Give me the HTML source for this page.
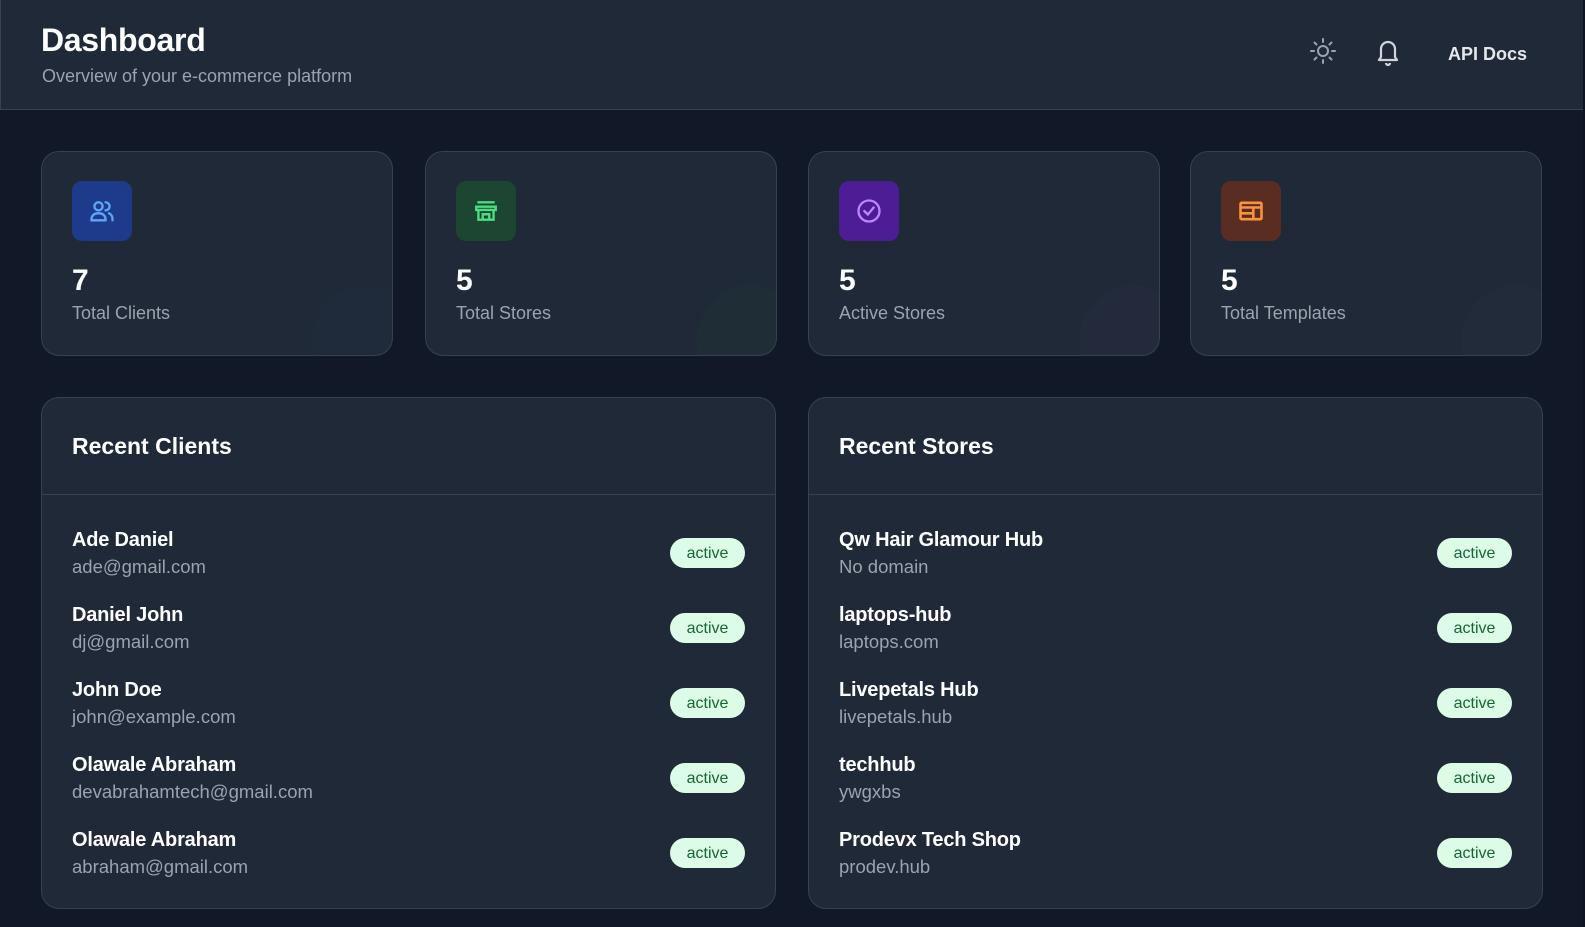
<!DOCTYPE html>
<html><head><meta charset="utf-8"><style>
*{box-sizing:border-box;margin:0;padding:0}
body{width:1585px;height:927px;background:#111827;font-family:"Liberation Sans",sans-serif;overflow:hidden;position:relative;color:#fff}
.hdr{position:absolute;left:0;top:0;width:1583px;height:110px;background:#1f2937;border-bottom:1px solid #374151;border-left:1px solid #374151}
.hdr h1{position:absolute;left:40px;top:22px;font-size:32px;line-height:36px;font-weight:700;letter-spacing:-0.3px}
.hdr p{position:absolute;left:41px;top:65px;font-size:18px;line-height:22px;color:#9ca3af}
.api{position:absolute;left:1447px;top:43px;font-size:18px;line-height:22px;font-weight:700;color:#e5e7eb}
.strip{position:absolute;left:1583px;top:0;width:2px;height:927px;background:#0f141e}
.card{position:absolute;top:151px;width:352px;height:205px;background:#1f2937;border:1px solid #374151;border-radius:18px;overflow:hidden}
.card .ic{position:absolute;left:30px;top:29px;width:60px;height:60px;border-radius:10px;display:flex;align-items:center;justify-content:center}
.card .n{position:absolute;left:30px;top:113px;font-size:30px;line-height:32px;font-weight:700}
.card .l{position:absolute;left:30px;top:150px;font-size:18px;line-height:22px;color:#9ca3af}
.card .blob{position:absolute;right:-30px;bottom:-40px;width:110px;height:110px;border-radius:50%}
.panel{position:absolute;top:397px;width:735px;height:512px;background:#1f2937;border:1px solid #374151;border-radius:18px}
.panel h2{position:absolute;left:30px;top:34px;font-size:23px;line-height:28px;font-weight:700}
.panel .div{position:absolute;left:0;right:0;top:96px;border-top:1px solid #374151}
.row{position:absolute;left:30px;right:30px;height:60px}
.row .nm{position:absolute;left:0;top:0;font-size:20px;line-height:24px;font-weight:700;letter-spacing:-0.2px}
.row .em{position:absolute;left:0;top:28px;font-size:18.5px;line-height:22px;color:#9ca3af}
.badge{position:absolute;right:0;top:10px;width:75px;height:30px;border-radius:15px;background:#dcfce7;color:#166534;font-size:16px;text-align:center;line-height:31px}
</style></head><body>
<div class="hdr">
<h1>Dashboard</h1>
<p>Overview of your e-commerce platform</p>
<svg style="position:absolute;left:1308px;top:37px" width="28" height="28" viewBox="0 0 28 28" fill="none" stroke="#9ca3af" stroke-width="2" stroke-linecap="round"><circle cx="14" cy="14" r="5"/><path d="M14 2v3M14 23v3M2 14h3M23 14h3M5.5 5.5l2 2M20.5 20.5l2 2M5.5 22.5l2-2M20.5 7.5l2-2"/></svg>
<svg style="position:absolute;left:1375px;top:39px" width="24" height="28" viewBox="0 0 24 28" fill="none" stroke="#d1d5db" stroke-width="2.2" stroke-linejoin="round"><path d="M12 3a7 7 0 0 0-7 7v8l-2 3h18l-2-3v-8a7 7 0 0 0-7-7z"/><path d="M10 24a2 2 0 0 0 4 0"/></svg>
<div class="api">API Docs</div>
</div>
<div class="strip"></div>

<div class="card" style="left:41px"><div class="ic" style="background:#1e3a8a"><svg width="28" height="28" viewBox="0 0 24 24" fill="none" stroke="#60a5fa" stroke-width="2" stroke-linecap="round"><circle cx="9" cy="8" r="3.5"/><path d="M3 20v-1a5 5 0 0 1 5-5h2a5 5 0 0 1 5 5v1z"/><path d="M15 4.5a3.5 3.5 0 0 1 0 7M18 14a5 5 0 0 1 3 5v1"/></svg></div><div class="n">7</div><div class="l">Total Clients</div><div class="blob" style="background:rgba(59,130,246,0.025)"></div></div>
<div class="card" style="left:425px"><div class="ic" style="background:#1c4532"><svg width="26" height="26" viewBox="0 0 24 24" fill="none" stroke="#4ade80" stroke-width="2.2"><path d="M4 4h16M3 8h18v3H3zM5 11v9h14v-9M9 20v-5h6v5"/></svg></div><div class="n">5</div><div class="l">Total Stores</div><div class="blob" style="background:rgba(34,197,94,0.025)"></div></div>
<div class="card" style="left:808px"><div class="ic" style="background:#4c1d95"><svg width="28" height="28" viewBox="0 0 24 24" fill="none" stroke="#c084fc" stroke-width="2" stroke-linecap="round"><circle cx="12" cy="12" r="9"/><path d="M8 12l3 3 5-6"/></svg></div><div class="n">5</div><div class="l">Active Stores</div><div class="blob" style="background:rgba(168,85,247,0.025)"></div></div>
<div class="card" style="left:1190px"><div class="ic" style="background:#5a2d22"><svg width="28" height="28" viewBox="0 0 24 24" fill="none" stroke="#fb923c" stroke-width="2.2"><rect x="3" y="5" width="18" height="14" rx="1"/><path d="M3 9h18M3 14h11M14 9v10"/></svg></div><div class="n">5</div><div class="l">Total Templates</div><div class="blob" style="background:rgba(255,255,255,0.012)"></div></div>

<div class="panel" style="left:41px"><h2>Recent Clients</h2><div class="div"></div>
<div class="row" style="top:130px"><div class="nm">Ade Daniel</div><div class="em">ade@gmail.com</div><div class="badge">active</div></div>
<div class="row" style="top:205px"><div class="nm">Daniel John</div><div class="em">dj@gmail.com</div><div class="badge">active</div></div>
<div class="row" style="top:280px"><div class="nm">John Doe</div><div class="em">john@example.com</div><div class="badge">active</div></div>
<div class="row" style="top:355px"><div class="nm">Olawale Abraham</div><div class="em">devabrahamtech@gmail.com</div><div class="badge">active</div></div>
<div class="row" style="top:430px"><div class="nm">Olawale Abraham</div><div class="em">abraham@gmail.com</div><div class="badge">active</div></div>
</div>
<div class="panel" style="left:808px"><h2>Recent Stores</h2><div class="div"></div>
<div class="row" style="top:130px"><div class="nm">Qw Hair Glamour Hub</div><div class="em">No domain</div><div class="badge">active</div></div>
<div class="row" style="top:205px"><div class="nm">laptops-hub</div><div class="em">laptops.com</div><div class="badge">active</div></div>
<div class="row" style="top:280px"><div class="nm">Livepetals Hub</div><div class="em">livepetals.hub</div><div class="badge">active</div></div>
<div class="row" style="top:355px"><div class="nm">techhub</div><div class="em">ywgxbs</div><div class="badge">active</div></div>
<div class="row" style="top:430px"><div class="nm">Prodevx Tech Shop</div><div class="em">prodev.hub</div><div class="badge">active</div></div>
</div>
</body></html>
